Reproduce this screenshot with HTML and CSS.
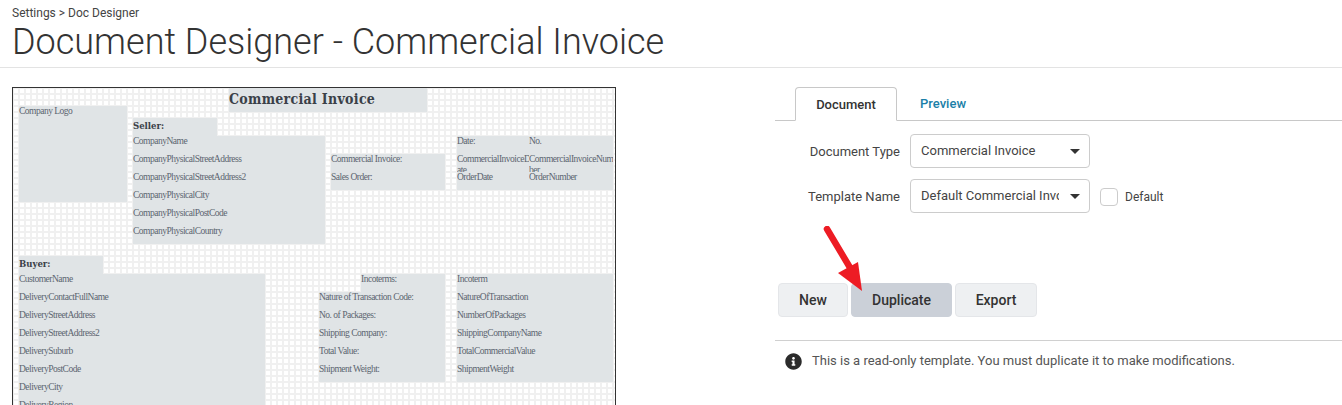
FILE: index.html
```html
<!DOCTYPE html>
<html lang="en">
<head>
<meta charset="utf-8">
<title>Document Designer - Commercial Invoice</title>
<link rel="stylesheet" href="styles.css">
</head>
<body>
<header class="page-head">
  <div class="crumb">Settings &gt; Doc Designer</div>
  <h1>Document Designer - Commercial Invoice</h1>
</header>
<main class="main">
  <section class="sheet">
    <div class="block title-block">Commercial Invoice</div>
    <div class="block logo-block"><span class="f f0">Company Logo</span></div>
    <div class="block seller-label"><b>Seller:</b></div>
    <div class="block seller-block">
      <span class="f">CompanyName</span><span class="f">CompanyPhysicalStreetAddress</span><span class="f">CompanyPhysicalStreetAddress2</span><span class="f">CompanyPhysicalCity</span><span class="f">CompanyPhysicalPostCode</span><span class="f">CompanyPhysicalCountry</span>
    </div>
    <div class="block ci-block"><span class="f">Commercial Invoice:</span><span class="f">Sales Order:</span></div>
    <div class="block date-block">
      <span class="cell">Date:</span><span class="cell">No.</span>
      <span class="cell">CommercialInvoiceD<br>ate</span><span class="cell">CommercialInvoiceNum<br>ber</span>
      <span class="cell">OrderDate</span><span class="cell">OrderNumber</span>
    </div>
    <div class="block buyer-label"><b>Buyer:</b></div>
    <div class="block buyer-block">
      <span class="f">CustomerName</span><span class="f">DeliveryContactFullName</span><span class="f">DeliveryStreetAddress</span><span class="f">DeliveryStreetAddress2</span><span class="f">DeliverySuburb</span><span class="f">DeliveryPostCode</span><span class="f">DeliveryCity</span><span class="f">DeliveryRegion</span>
    </div>
    <div class="block inco-top"><span class="f">Incoterms:</span></div>
    <div class="block inco-labels">
      <span class="f">Nature of Transaction Code:</span><span class="f">No. of Packages:</span><span class="f">Shipping Company:</span><span class="f">Total Value:</span><span class="f">Shipment Weight:</span>
    </div>
    <div class="block inco-values">
      <span class="f">Incoterm</span><span class="f">NatureOfTransaction</span><span class="f">NumberOfPackages</span><span class="f">ShippingCompanyName</span><span class="f">TotalCommercialValue</span><span class="f">ShipmentWeight</span>
    </div>
  </section>
  <section class="panel">
    <nav class="tabs">
      <a class="tab active">Document</a>
      <a class="tab">Preview</a>
    </nav>
    <div class="form">
      <div class="row">
        <label class="lbl">Document Type</label>
        <div class="select"><span class="select-text">Commercial Invoice</span><svg class="caret" viewBox="0 0 10 5"><path d="M0 0h10L5 5z"/></svg></div>
      </div>
      <div class="row">
        <label class="lbl">Template Name</label>
        <div class="select"><span class="select-text">Default Commercial Invoice</span><svg class="caret" viewBox="0 0 10 5"><path d="M0 0h10L5 5z"/></svg></div>
        <span class="check"></span>
        <span class="check-label">Default</span>
      </div>
    </div>
    <div class="buttons">
      <button class="btn btn-new">New</button>
      <button class="btn btn-dup">Duplicate</button>
      <button class="btn btn-exp">Export</button>
      <svg class="arrow" viewBox="0 0 50 72" width="50" height="72">
        <path d="M5 3 L30 45" stroke="#ed1c24" stroke-width="6.5" stroke-linecap="round" fill="none"/>
        <path d="M40 65 L16 47 L36 36 Z" fill="#ed1c24"/>
      </svg>
    </div>
    <div class="note">
      <svg class="info" viewBox="0 0 512 512"><path d="M256 8C119.043 8 8 119.083 8 256c0 136.997 111.043 248 248 248s248-111.003 248-248C504 119.083 392.957 8 256 8zm0 110c23.196 0 42 18.804 42 42s-18.804 42-42 42-42-18.804-42-42 18.804-42 42-42zm56 254c0 6.627-5.373 12-12 12h-88c-6.627 0-12-5.373-12-12v-24c0-6.627 5.373-12 12-12h12v-64h-12c-6.627 0-12-5.373-12-12v-24c0-6.627 5.373-12 12-12h64c6.627 0 12 5.373 12 12v100h12c6.627 0 12 5.373 12 12v24z"/></svg>
      <span>This is a read-only template. You must duplicate it to make modifications.</span>
    </div>
  </section>
</main>
</body>
</html>
```
FILE: styles.css
```css
* { box-sizing: border-box; }
html, body { margin: 0; height: 405px; overflow: hidden; background: #fff; }
body { font-family: Roboto, "Liberation Sans", sans-serif; color: #333; }

.page-head { height: 68px; padding: 6px 12px 0; border-bottom: 1px solid #e3e3e3; }
.crumb { font-size: 12px; line-height: 14px; color: #444; }
h1 { margin: 0; font-size: 36px; line-height: 44px; font-weight: 300; color: #333; letter-spacing: 0; }

.main { display: flex; padding: 19px 0 0 12px; }

.sheet {
  position: relative; flex: none; width: 604px; height: 330px;
  border: 1px solid #333; border-bottom: 0;
  background-color: #fff;
  background-image:
    linear-gradient(#f0f0f0 2px, transparent 2px),
    linear-gradient(90deg, #f0f0f0 2px, transparent 2px);
  background-size: 6px 6px;
  background-position: -1px -1px;
  font-family: "Liberation Serif", serif; font-size: 9.5px; letter-spacing: -.5px; color: #5c6470;
}
.block { position: absolute; background: #e0e4e6; }
.f { display: block; height: 18px; line-height: 10px; white-space: nowrap; }
.title-block { left: 216px; top: 0; width: 198px; height: 24px; font-family: "DejaVu Serif", serif; font-stretch: condensed; font-weight: 700; font-size: 14px; letter-spacing: .3px; line-height: 23px; color: #3a4048; white-space: nowrap; }
.logo-block { left: 6px; top: 18px; width: 108px; height: 96px; }
.seller-label { left: 120px; top: 30px; width: 84px; height: 18px; }
.seller-block { left: 120px; top: 48px; width: 192px; height: 108px; }
.ci-block { left: 318px; top: 66px; width: 114px; height: 36px; }
.date-block { left: 444px; top: 48px; width: 156px; height: 54px; display: grid; grid-template-columns: 72px 84px; grid-auto-rows: 18px; }
.cell { overflow: hidden; line-height: 11px; height: 18px; white-space: nowrap; }
.buyer-label { left: 6px; top: 168px; width: 84px; height: 18px; }
.buyer-block { left: 6px; top: 186px; width: 246px; height: 150px; }
.inco-top { left: 348px; top: 186px; width: 84px; height: 18px; }
.inco-labels { left: 306px; top: 204px; width: 126px; height: 90px; }
.inco-values { left: 444px; top: 186px; width: 156px; height: 108px; }
.seller-label b, .buyer-label b { font-family: "DejaVu Serif", serif; font-stretch: condensed; font-size: 9.5px; letter-spacing: 0; color: #3a4048; line-height: 15px; }

.panel { margin-left: 159px; flex: 1; min-width: 0; }
.tabs { display: flex; height: 34px; border-bottom: 1px solid #c8c8c8; }
.tab { height: 34px; padding: 0 20px; font-size: 13px; font-weight: 500; line-height: 33px; color: #1b7fa8; }
.tab.active { margin-left: 20px; width: 102px; padding: 0; text-align: center; color: #333; background: #fff; border: 1px solid #c8c8c8; border-bottom-color: #fff; border-radius: 4px 4px 0 0; }
.tab:not(.active) { margin-left: 3px; }

.form { padding-top: 13px; }
.row { display: flex; align-items: center; height: 34px; margin-bottom: 11px; }
.lbl { width: 125px; text-align: right; font-size: 13px; color: #444; }
.select { position: relative; width: 180px; height: 34px; margin-left: 10px; border: 1px solid #ccc; border-radius: 4px; padding: 0 30px 0 10px; line-height: 32px; font-size: 13px; color: #444; background: #fff; }
.select-text { display: block; overflow: hidden; white-space: nowrap; }
.caret { position: absolute; right: 9px; top: 14px; width: 10px; height: 5px; fill: #333; }
.check { width: 18px; height: 18px; margin: 2px 0 0 10px; border: 1px solid #ccc; border-radius: 4px; }
.check-label { margin: 2px 0 0 7px; font-size: 12px; color: #444; }

.buttons { position: relative; display: flex; gap: 3px; padding: 59px 0 23px 3px; border-bottom: 1px solid #d0d0d0; }
.btn { height: 34px; border: 1px solid #e4e6e9; border-radius: 4px; background: #eef0f2; font: 500 14px Roboto, sans-serif; color: #333; padding: 0 0 1px; }
.btn-new { width: 70px; }
.btn-dup { width: 101px; background: #cbd0d8; border-color: #cbd0d8; }
.btn-exp { width: 82px; }
.arrow { position: absolute; left: 47px; top: 2px; }

.note { display: flex; align-items: center; gap: 10px; padding: 11px 0 0 10px; font-size: 13px; line-height: 18px; color: #555; }
.info { width: 17px; height: 17px; fill: #2b2b2b; flex: none; }
```
